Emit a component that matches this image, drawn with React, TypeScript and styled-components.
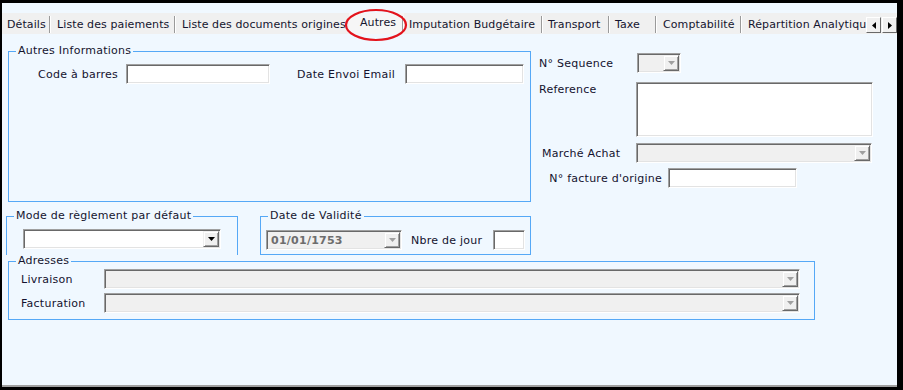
import React from 'react';
import styled, { createGlobalStyle } from 'styled-components';

// ----------------------------------------------------
// Global
// ----------------------------------------------------
const GlobalStyle = createGlobalStyle`
  html, body {
    margin: 0;
    padding: 0;
    background: #ffffff;
  }
  body {
    font-family: "DejaVu Sans", Verdana, sans-serif;
    font-size: 11px;
    letter-spacing: 0.25px;
    color: #12122c;
  }
`;

// ----------------------------------------------------
// Window frame
// ----------------------------------------------------
const Window = styled.div`
  position: relative;
  width: 903px;
  height: 390px;
  box-sizing: border-box;
  border-style: solid;
  border-color: #000;
  border-width: 3px 6px 3px 2px;
  background: #f0f8ff;
  display: flex;
  flex-direction: column;
`;

const Frame = styled.div`
  flex: 1;
  display: flex;
  flex-direction: column;
  border-bottom: 2px solid #a0a0a0;
`;

// ----------------------------------------------------
// Tabs
// ----------------------------------------------------
const TabStrip = styled.div`
  margin-top: 10px;
  height: 21px;
  display: flex;
  background: #f0f0f0;
`;

const Tab = styled.div<{ $w?: number; $active?: boolean }>`
  display: flex;
  flex: ${p => (p.$w ? `0 0 ${p.$w}px` : '1 1 0')};
  min-width: 0;
  background: ${p => (p.$active ? '#f6f6f6' : '#f0f0f0')};
`;

const TabLabel = styled.span<{ $active?: boolean; $pl: number }>`
  flex: 1;
  min-width: 0;
  overflow: hidden;
  white-space: nowrap;
  line-height: 13px;
  letter-spacing: 0.1px;
  padding: ${p => (p.$active ? 3 : 5)}px 0 0 ${p => p.$pl}px;
  color: #14142e;
`;

const TabSep = styled.span`
  flex: 0 0 1px;
  height: 17px;
  align-self: flex-end;
  margin-bottom: 1px;
  background: #9a9a9a;
  border-right: 1px solid #ffffff;
`;

const ScrollArrows = styled.div`
  display: flex;
  align-items: flex-end;
  padding-bottom: 1px;
  gap: 1px;
`;

const ArrowBtn = styled.div`
  width: 15px;
  height: 16px;
  box-sizing: border-box;
  border: 1px solid;
  border-color: #ffffff #696969 #696969 #ffffff;
  background: #f0f0f0;
  display: flex;
  align-items: center;
  justify-content: center;
`;

const Annotation = styled.svg`
  position: absolute;
  left: 342px;
  top: 5px;
  pointer-events: none;
`;

// ----------------------------------------------------
// Content
// ----------------------------------------------------
const Content = styled.div`
  padding: 17px 0 0 4px;
  display: flex;
  flex-direction: column;
`;

const TopArea = styled.div`
  display: flex;
  align-items: flex-start;
`;

const LeftCol = styled.div`
  width: 525px;
  display: flex;
  flex-direction: column;
`;

const RightCol = styled.div`
  margin-left: 8px;
  display: flex;
  flex-direction: column;
`;

const Group = styled.div<{ $w: number; $h: number; $ml?: number; $mt?: number; $open?: boolean }>`
  box-sizing: border-box;
  width: ${p => p.$w}px;
  height: ${p => p.$h}px;
  margin-left: ${p => p.$ml ?? 0}px;
  margin-top: ${p => p.$mt ?? 0}px;
  border: 1px solid #55a8f6;
  border-bottom: ${p => (p.$open ? 'none' : '1px solid #55a8f6')};
`;

const Caption = styled.div`
  display: table;
  margin: -8px 0 0 7px;
  padding: 0 2px;
  line-height: 13px;
  background: #f0f8ff;
  color: #14142e;
`;

const GroupRow = styled.div<{ $mt: number; $ml?: number }>`
  display: flex;
  align-items: center;
  margin-top: ${p => p.$mt}px;
  margin-left: ${p => p.$ml ?? 0}px;
`;

const BottomRow = styled.div`
  display: flex;
  gap: 22px;
  margin-top: 14px;
`;

const FormRow = styled.div<{ $mt: number; $top?: boolean }>`
  display: flex;
  align-items: ${p => (p.$top ? 'flex-start' : 'center')};
  margin-top: ${p => p.$mt}px;
`;

const Label = styled.span<{ $w: number; $align?: 'left' | 'right'; $pl?: number; $pr?: number; $pt?: number }>`
  box-sizing: border-box;
  flex: 0 0 ${p => p.$w}px;
  text-align: ${p => p.$align ?? 'left'};
  padding-left: ${p => p.$pl ?? 0}px;
  padding-right: ${p => p.$pr ?? 0}px;
  padding-top: ${p => p.$pt ?? 0}px;
  line-height: 13px;
  white-space: nowrap;
  color: #14122e;
`;

const Sunken = styled.div<{ $w: number; $h?: number; $disabled?: boolean }>`
  box-sizing: border-box;
  flex: 0 0 ${p => p.$w}px;
  width: ${p => p.$w}px;
  height: ${p => p.$h ?? 20}px;
  border: 1px solid;
  border-color: #a0a0a0 #ffffff #ffffff #a0a0a0;
  box-shadow: inset 1px 1px 0 #696969, inset -1px -1px 0 #e3e3e3;
  padding: 1px;
  background: ${p => (p.$disabled ? '#f0f0f0' : '#ffffff')};
  display: flex;
  align-items: center;
`;

const ComboValue = styled.span`
  flex: 1;
  padding-left: 3px;
  font-weight: bold;
  color: #6d6d6d;
  white-space: nowrap;
  overflow: hidden;
`;

const DropBtn = styled.span`
  margin-left: auto;
  width: 16px;
  height: 16px;
  box-sizing: border-box;
  border: 1px solid;
  border-color: #f0f0f0 #696969 #696969 #f0f0f0;
  box-shadow: inset 1px 1px 0 #ffffff, inset -1px -1px 0 #a0a0a0;
  background: #f0f0f0;
  display: flex;
  align-items: center;
  justify-content: center;
`;

// ----------------------------------------------------
// Small parts
// ----------------------------------------------------
const DownTri: React.FC<{ color: string }> = ({ color }) => (
  <svg width="7" height="4" viewBox="0 0 7 4">
    <polygon points="0,0 7,0 3.5,4" fill={color} />
  </svg>
);

const Combo: React.FC<{ w: number; disabled?: boolean; value?: string }> = ({ w, disabled, value }) => (
  <Sunken $w={w} $disabled={disabled}>
    {value && <ComboValue>{value}</ComboValue>}
    <DropBtn>
      <DownTri color={disabled ? '#a0a0a0' : '#000000'} />
    </DropBtn>
  </Sunken>
);

const tabs: { label: string; w?: number; pl: number; sep: boolean; active?: boolean }[] = [
  { label: 'Détails', w: 49, pl: 5, sep: true },
  { label: 'Liste des paiements', w: 125, pl: 6, sep: true },
  { label: 'Liste des documents origines', w: 173, pl: 6, sep: false },
  { label: 'Autres', w: 55, pl: 11, sep: true, active: true },
  { label: 'Imputation Budgétaire', w: 139, pl: 5, sep: true },
  { label: 'Transport', w: 67, pl: 5, sep: true },
  { label: 'Taxe', w: 47, pl: 5, sep: true },
  { label: 'Comptabilité', w: 85, pl: 6, sep: true },
  { label: 'Répartition Analytiqu', pl: 6, sep: false },
];

export default function App() {
  return (
    <>
      <GlobalStyle />
      <Window>
        <Frame>
          <TabStrip>
            {tabs.map(t => (
              <Tab key={t.label} $w={t.w} $active={t.active}>
                <TabLabel $pl={t.pl} $active={t.active}>{t.label}</TabLabel>
                {t.sep && <TabSep />}
              </Tab>
            ))}
            <ScrollArrows>
              <ArrowBtn>
                <svg width="4" height="7" viewBox="0 0 4 7">
                  <polygon points="4,0 4,7 0,3.5" fill="#000" />
                </svg>
              </ArrowBtn>
              <ArrowBtn>
                <svg width="4" height="7" viewBox="0 0 4 7">
                  <polygon points="0,0 0,7 4,3.5" fill="#000" />
                </svg>
              </ArrowBtn>
            </ScrollArrows>
          </TabStrip>

          <Content>
            <TopArea>
              <LeftCol>
                <Group $w={523} $h={151} $ml={2}>
                  <Caption>Autres Informations</Caption>
                  <GroupRow $mt={7}>
                    <Label $w={117} $align="right" $pr={8}>Code à barres</Label>
                    <Sunken $w={144} />
                    <Label $w={135} $align="right" $pr={10}>Date Envoi Email</Label>
                    <Sunken $w={119} />
                  </GroupRow>
                </Group>

                <BottomRow>
                  <Group $w={232} $h={39} $open>
                    <Caption>Mode de règlement par défaut</Caption>
                    <GroupRow $mt={7} $ml={16}>
                      <Combo w={198} />
                    </GroupRow>
                  </Group>
                  <Group $w={271} $h={39}>
                    <Caption>Date de Validité</Caption>
                    <GroupRow $mt={8} $ml={5}>
                      <Combo w={136} disabled value="01/01/1753" />
                      <Label $w={91} $pl={9}>Nbre de jour</Label>
                      <Sunken $w={32} />
                    </GroupRow>
                  </Group>
                </BottomRow>
              </LeftCol>

              <RightCol>
                <FormRow $mt={2}>
                  <Label $w={98}>N° Sequence</Label>
                  <Combo w={44} disabled />
                </FormRow>
                <FormRow $mt={9} $top>
                  <Label $w={97} $pt={1}>Reference</Label>
                  <Sunken $w={237} $h={55} />
                </FormRow>
                <FormRow $mt={6}>
                  <Label $w={97} $pl={3}>Marché Achat</Label>
                  <Combo w={236} disabled />
                </FormRow>
                <FormRow $mt={5}>
                  <Label $w={129} $align="right" $pr={6}>N° facture d'origine</Label>
                  <Sunken $w={129} />
                </FormRow>
              </RightCol>
            </TopArea>

            <Group $w={807} $h={59} $ml={2} $mt={6}>
              <Caption>Adresses</Caption>
              <GroupRow $mt={2}>
                <Label $w={95} $pl={12}>Livraison</Label>
                <Combo w={696} disabled />
              </GroupRow>
              <GroupRow $mt={4}>
                <Label $w={95} $pl={12}>Facturation</Label>
                <Combo w={696} disabled />
              </GroupRow>
            </Group>
          </Content>
        </Frame>

        <Annotation width="64" height="34" viewBox="0 0 64 34">
          <ellipse cx="32" cy="17" rx="30" ry="15" fill="none" stroke="#e3131c" strokeWidth="2.2" />
        </Annotation>
      </Window>
    </>
  );
}
